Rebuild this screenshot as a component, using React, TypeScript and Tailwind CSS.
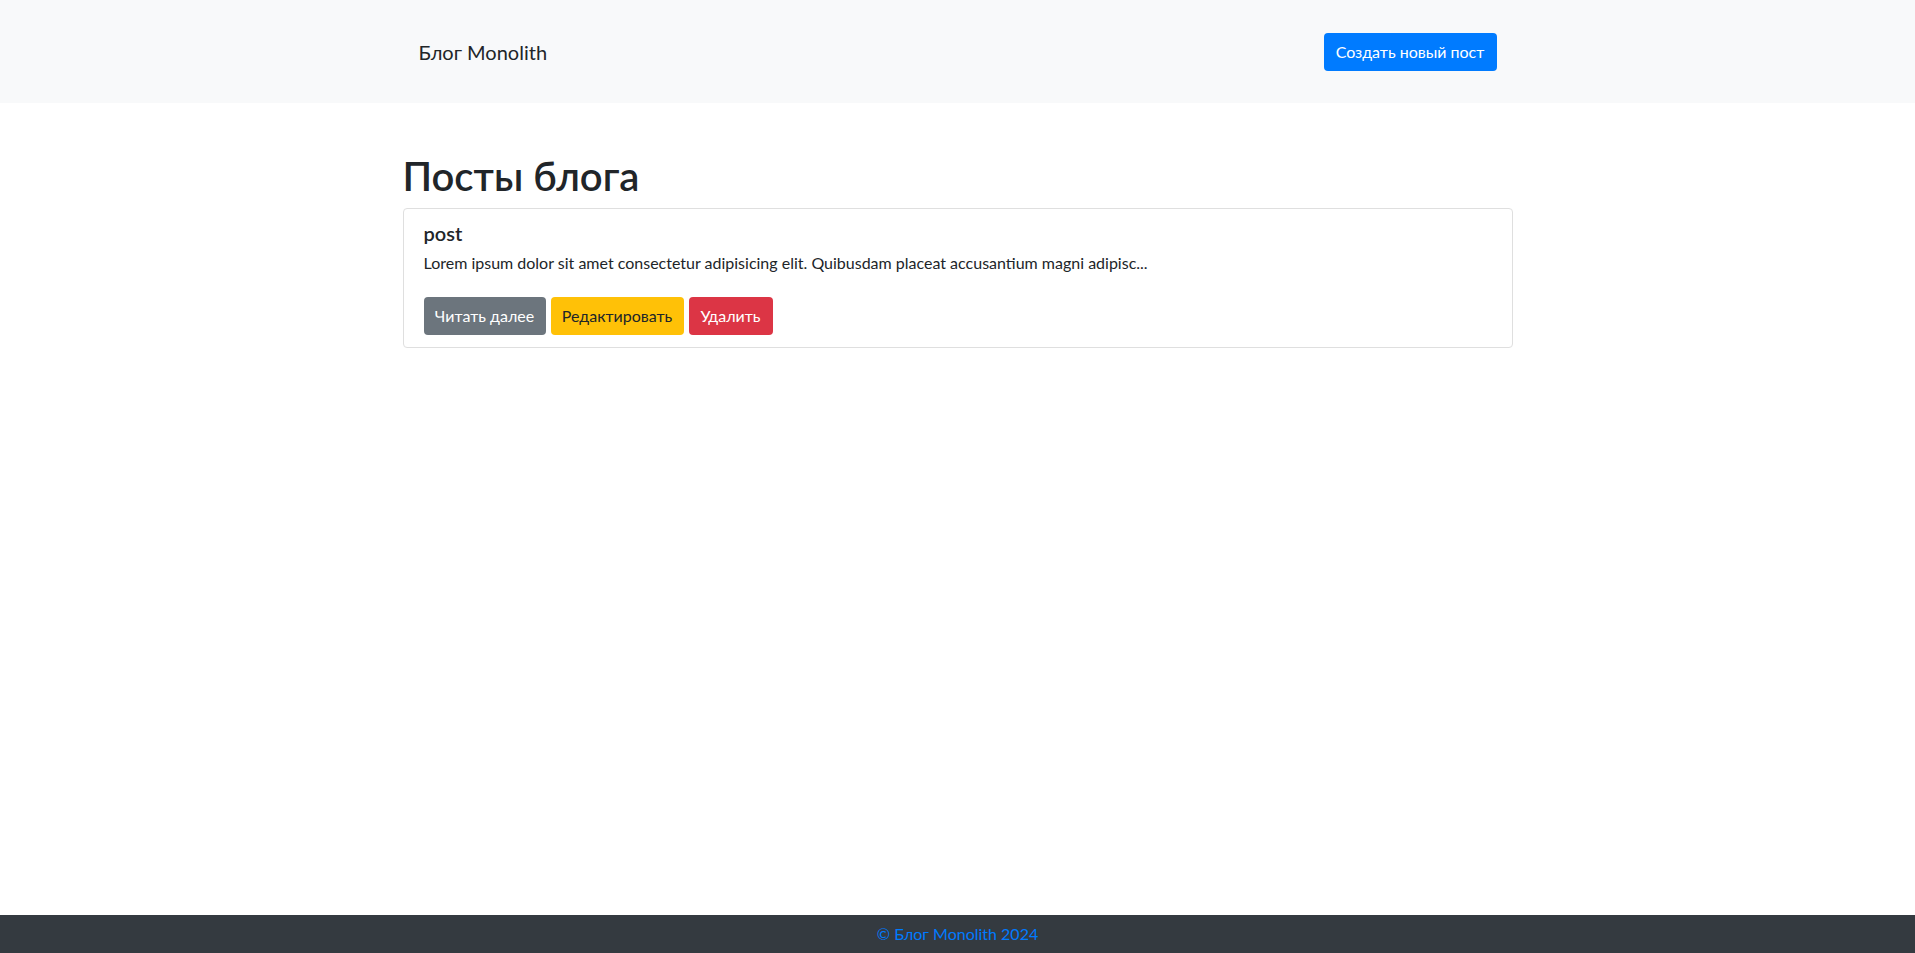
import React from 'react';

const posts = [
  {
    id: 1,
    title: 'post',
    excerpt:
      'Lorem ipsum dolor sit amet consectetur adipisicing elit. Quibusdam placeat accusantium magni adipisc...',
  },
];

function Header() {
  return (
    <header className="flex h-[103px] w-full items-center bg-[#f8f9fa]">
      <nav className="mx-auto flex w-[1110px] items-center justify-between px-4">
        <a href="#" className="py-[5px] text-[20px] leading-[30px] text-[#212529]">
          Блог Monolith
        </a>
        <button className="h-[38px] w-[173px] rounded-[4px] bg-[#007bff] text-[16px] text-white">
          Создать новый пост
        </button>
      </nav>
    </header>
  );
}

function PostCard({ title, excerpt }: { title: string; excerpt: string }) {
  return (
    <div className="rounded-[4px] border border-[#dfdfdf] bg-white px-5 pb-[12px] pt-[12px]">
      <h5 className="mb-[6px] text-[20px] font-semibold leading-[24px] text-[#212529]">{title}</h5>
      <p className="mb-[22px] text-[16px] leading-[24px] text-[#212529]">{excerpt}</p>
      <div className="flex gap-[5px]">
        <button className="h-[38px] w-[122px] rounded-[4px] bg-[#6c757d] text-[16px] text-white">
          Читать далее
        </button>
        <button className="h-[38px] w-[133px] rounded-[4px] bg-[#ffc107] text-[16px] text-[#212529]">
          Редактировать
        </button>
        <button className="h-[38px] w-[84px] rounded-[4px] bg-[#dc3545] text-[16px] text-white">
          Удалить
        </button>
      </div>
    </div>
  );
}

export default function App() {
  return (
    <div
      className="flex min-h-screen flex-col bg-white"
      style={{ fontFamily: 'Lato, "Noto Sans", sans-serif' }}
    >
      <Header />
      <main className="mx-auto w-[1110px] flex-1 pt-[49px]">
        <h1 className="mb-2 text-[40px] font-semibold leading-[48px] text-[#212529]">Посты блога</h1>
        {posts.map((p) => (
          <PostCard key={p.id} title={p.title} excerpt={p.excerpt} />
        ))}
      </main>
      <footer className="flex h-[38px] items-center justify-center bg-[#343a40] text-[16px] text-[#007bff]">
        © Блог Monolith 2024
      </footer>
    </div>
  );
}
